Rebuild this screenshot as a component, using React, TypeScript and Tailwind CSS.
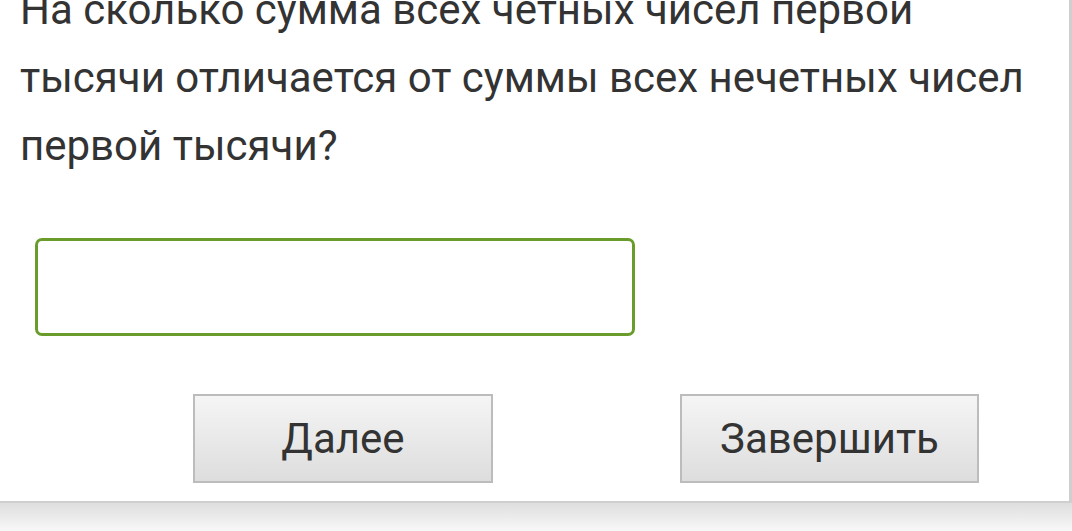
import React from "react";

export default function App() {
  return (
    <div className="w-[1072px] h-[531px] overflow-hidden bg-[#f6f6f6] flex flex-col" style={{ fontFamily: "Roboto, 'Noto Sans', sans-serif" }}>
      <div className="w-[1072px] h-[503px] shrink-0 bg-white border-r-[3px] border-b-[2px] border-[#cfcfcf] flex flex-col overflow-hidden">
        <div className="mt-[-24px] pl-[20px] text-[42px] leading-[68px] text-[#333333] whitespace-nowrap">
          На сколько сумма всех четных чисел первой
          <br />
          тысячи отличается от суммы всех нечетных чисел
          <br />
          первой тысячи?
        </div>
        <div className="mt-[58px] ml-[35px] w-[600px] h-[98px] rounded-[7px] border-[3px] border-[#6a9c2c] bg-white" />
        <div className="mt-[58px] flex">
          <button className="ml-[193px] w-[300px] h-[89px] border-2 border-[#bcbcbc] bg-gradient-to-b from-[#f5f5f5] to-[#dddddd] text-[42px] text-[#333333] flex items-center justify-center">
            Далее
          </button>
          <button className="ml-[187px] w-[299px] h-[89px] border-2 border-[#bcbcbc] bg-gradient-to-b from-[#f5f5f5] to-[#dddddd] text-[42px] text-[#333333] flex items-center justify-center">
            Завершить
          </button>
        </div>
      </div>
      <div className="flex-1 bg-gradient-to-b from-[#dedede] to-[#f8f8f8]" />
    </div>
  );
}
